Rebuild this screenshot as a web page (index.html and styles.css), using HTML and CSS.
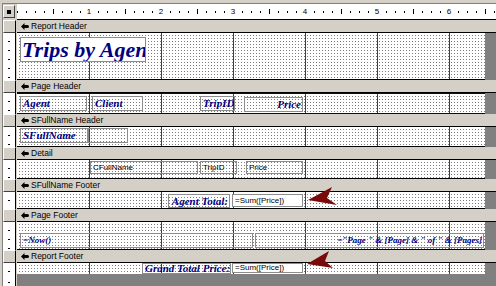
FILE: index.html
```html
<!DOCTYPE html>
<html lang="en">
<head>
    <meta charset="UTF-8">
    <title>Trips by Agent - Report Design</title>
    <link rel="stylesheet" href="styles.css">
</head>
<body>
    <div class="frame">
        <!-- ruler -->
        <div class="ruler-row">
            <div class="corner"><span class="corner-box"><i></i></span></div>
            <div class="hruler">
                <span class="lead"></span>
                <span class="num"><b>1</b></span>
                <span class="num"><b>2</b></span>
                <span class="num"><b>3</b></span>
                <span class="num"><b>4</b></span>
                <span class="num"><b>5</b></span>
                <span class="num"><b>6</b></span>
            </div>
        </div>

        <!-- Report Header -->
        <div class="bar">
            <div class="sel"></div>
            <div class="bar-title"><svg class="ico" viewBox="0 0 8 7"><path d="M0 3.5L3.5 0V2H6.5Q8 2 8 3.5Q8 5 6.5 5H3.5V7Z"/></svg>Report Header</div>
        </div>
        <div class="body rh">
            <div class="vruler"></div>
            <div class="canvas">
                <div class="cols"><i></i><i></i><i></i><i></i><i></i><i></i><i></i></div>
                <div class="ctl lbl title" style="left:3px;top:4px;width:126px;height:25px">Trips by Agent</div>
            </div>
            <div class="gutter"></div>
        </div>

        <!-- Page Header -->
        <div class="bar">
            <div class="sel"></div>
            <div class="bar-title"><svg class="ico" viewBox="0 0 8 7"><path d="M0 3.5L3.5 0V2H6.5Q8 2 8 3.5Q8 5 6.5 5H3.5V7Z"/></svg>Page Header</div>
        </div>
        <div class="body ph">
            <div class="vruler"></div>
            <div class="canvas lined">
                <div class="cols"><i></i><i></i><i></i><i></i><i></i><i></i><i></i></div>
                <div class="ctl lbl" style="left:3px;top:2px;width:67px;height:15px">Agent</div>
                <div class="ctl lbl" style="left:75px;top:2px;width:51px;height:15px">Client</div>
                <div class="ctl lbl right" style="left:183px;top:2px;width:35px;height:15px">TripID</div>
                <div class="ctl lbl right" style="left:227px;top:3px;width:59px;height:15px">Price</div>
            </div>
            <div class="gutter"></div>
        </div>

        <!-- SFullName Header -->
        <div class="bar">
            <div class="sel"></div>
            <div class="bar-title"><svg class="ico" viewBox="0 0 8 7"><path d="M0 3.5L3.5 0V2H6.5Q8 2 8 3.5Q8 5 6.5 5H3.5V7Z"/></svg>SFullName Header</div>
        </div>
        <div class="body sfh">
            <div class="vruler"></div>
            <div class="canvas">
                <div class="cols"><i></i><i></i><i></i><i></i><i></i><i></i><i></i></div>
                <div class="ctl lbl" style="left:3px;top:1px;width:68px;height:15px">SFullName</div>
                <div class="ctl" style="left:71px;top:1px;width:40px;height:15px"></div>
            </div>
            <div class="gutter"></div>
        </div>

        <!-- Detail -->
        <div class="bar">
            <div class="sel"></div>
            <div class="bar-title"><svg class="ico" viewBox="0 0 8 7"><path d="M0 3.5L3.5 0V2H6.5Q8 2 8 3.5Q8 5 6.5 5H3.5V7Z"/></svg>Detail</div>
        </div>
        <div class="body det">
            <div class="vruler"></div>
            <div class="canvas">
                <div class="cols"><i></i><i></i><i></i><i></i><i></i><i></i><i></i></div>
                <div class="ctl txt" style="left:73px;top:1px;width:108px;height:13px">CFullName</div>
                <div class="ctl txt" style="left:183px;top:1px;width:37px;height:13px">TripID</div>
                <div class="ctl txt" style="left:229px;top:1px;width:57px;height:13px">Price</div>
            </div>
            <div class="gutter"></div>
        </div>

        <!-- SFullName Footer -->
        <div class="bar">
            <div class="sel"></div>
            <div class="bar-title"><svg class="ico" viewBox="0 0 8 7"><path d="M0 3.5L3.5 0V2H6.5Q8 2 8 3.5Q8 5 6.5 5H3.5V7Z"/></svg>SFullName Footer</div>
        </div>
        <div class="body sff">
            <div class="vruler"></div>
            <div class="canvas">
                <div class="cols"><i></i><i></i><i></i><i></i><i></i><i></i><i></i></div>
                <div class="ctl lbl right" style="left:151px;top:2px;width:62px;height:14px">Agent Total:</div>
                <div class="ctl txt box" style="left:215px;top:2px;width:71px;height:13px">=Sum([Price])</div>
            </div>
            <div class="gutter"></div>
        </div>

        <!-- Page Footer -->
        <div class="bar">
            <div class="sel"></div>
            <div class="bar-title"><svg class="ico" viewBox="0 0 8 7"><path d="M0 3.5L3.5 0V2H6.5Q8 2 8 3.5Q8 5 6.5 5H3.5V7Z"/></svg>Page Footer</div>
        </div>
        <div class="body pf">
            <div class="vruler"></div>
            <div class="canvas">
                <div class="cols"><i></i><i></i><i></i><i></i><i></i><i></i><i></i></div>
                <div class="ctl lbl expr" style="left:3px;top:11px;width:233px;height:15px">=Now()</div>
                <div class="ctl lbl expr right" style="left:238px;top:11px;width:229px;height:15px">="Page " &amp; [Page] &amp; " of " &amp; [Pages]</div>
            </div>
            <div class="gutter"></div>
        </div>

        <!-- Report Footer -->
        <div class="bar">
            <div class="sel"></div>
            <div class="bar-title"><svg class="ico" viewBox="0 0 8 7"><path d="M0 3.5L3.5 0V2H6.5Q8 2 8 3.5Q8 5 6.5 5H3.5V7Z"/></svg>Report Footer</div>
        </div>
        <div class="body rf">
            <div class="vruler"></div>
            <div class="canvas">
                <div class="cols"><i></i><i></i><i></i><i></i><i></i><i></i><i></i></div>
                <div class="ctl lbl right" style="left:125px;top:0;width:89px;height:11px">Grand Total Price:</div>
                <div class="ctl txt box" style="left:215px;top:0;width:71px;height:10px">=Sum([Price])</div>
            </div>
            <div class="gutter"></div>
        </div>

        <div class="tail">
            <div class="vruler"></div>
            <div class="void"></div>
        </div>
    </div>

    <!-- callout arrows -->
    <svg class="arrows" width="496" height="286" viewBox="0 0 496 286">
        <path d="M308 200L332 187L327 198L337 205Z"/>
        <path d="M307 264L329 251L325 261L333 268Z"/>
    </svg>
</body>
</html>
```

FILE: styles.css
```css
* {
    box-sizing: border-box;
}
html, body {
    margin: 0;
    padding: 0;
}
body {
    position: relative;
    width: 496px;
    height: 286px;
    overflow: hidden;
    background-color: #d4d0c8;
    font-family: "Liberation Sans", Arial, sans-serif;
}
.frame {
    margin: 3px 0 0 2px;
    height: 283px;
    border-top: 1px solid #808080;
    border-left: 1px solid #808080;
    display: flex;
    flex-direction: column;
}

/* rulers */
.ruler-row {
    display: flex;
    height: 16px;
    flex: none;
}
.corner {
    width: 14px;
    padding: 1px 2px 2px 0;
}
.corner-box {
    display: flex;
    align-items: center;
    justify-content: center;
    height: 100%;
    border: 1px solid;
    border-color: #fff #404040 #404040 #fff;
}
.corner-box i {
    width: 4px;
    height: 4px;
    background: #000;
}
.hruler {
    flex: 1;
    display: flex;
    align-items: center;
    background-color: #fff;
    border-bottom: 1px solid #000;
    background-image:
        linear-gradient(to right, #000 1px, transparent 1px),
        linear-gradient(to right, #000 1px, transparent 1px);
    background-size: 9px 2px, 72px 5px;
    background-position: 0 7px, 36px 5px;
    background-repeat: repeat-x;
}
.hruler .lead {
    width: 36px;
    flex: none;
}
.hruler .num {
    width: 72px;
    flex: none;
    text-align: center;
    font-size: 8px;
    line-height: 8px;
}
.hruler .num b {
    font-weight: normal;
    background: #fff;
    padding: 0 1px;
}
.vruler {
    width: 13px;
    margin-right: 1px;
    border-right: 1px solid #000;
    background-color: #fff;
    background-image: linear-gradient(to bottom, #000 1px, transparent 1px);
    background-size: 2px 9px;
    background-position: 5px 8px;
    background-repeat: repeat-y;
}

/* section bars */
.bar {
    display: flex;
    height: 13px;
    flex: none;
}
.sel {
    width: 13px;
    margin-right: 1px;
    border: 1px solid;
    border-color: #fff #404040 #404040 #fff;
    border-right: 1px solid #000;
}
.bar-title {
    flex: 1;
    display: flex;
    align-items: center;
    padding-left: 4px;
    font-size: 8.5px;
    color: #000;
    border-bottom: 1px solid #000;
}
.ico {
    width: 8px;
    height: 7px;
    margin-right: 2px;
    fill: #000;
}

/* section bodies */
.body {
    display: flex;
    flex: none;
}
.rh { height: 47px; }
.ph { height: 21px; }
.sfh { height: 20px; }
.det { height: 19px; }
.sff { height: 17px; }
.pf { height: 28px; }
.rf { height: 11px; }

.canvas {
    position: relative;
    width: 468px;
    overflow: hidden;
    border-bottom: 1px solid #000;
    background-color: #fff;
    background-image:
        linear-gradient(90deg, #fff 2px, transparent 2px),
        linear-gradient(#fff 2px, #7c7c7c 2px);
    background-size: 3px 3px;
}
.rf .canvas {
    border-bottom: none;
}
.canvas.lined {
    border-top: 1px solid #000080;
    border-bottom-color: #000080;
}
.cols {
    display: flex;
    height: 100%;
}
.cols i {
    width: 72px;
    flex: none;
}
.cols i + i {
    border-left: 1px solid #404040;
}
.cols i:last-child {
    flex: 1;
}
.gutter {
    flex: 1;
    background: #808080;
}
.tail {
    flex: 1;
    display: flex;
}
.void {
    flex: 1;
    background: #808080;
}

/* controls */
.ctl {
    position: absolute;
    border: 1px solid #8c8c8c;
    white-space: nowrap;
    overflow: hidden;
}
.lbl {
    font-family: "Liberation Serif", "Times New Roman", serif;
    font-weight: bold;
    font-style: italic;
    font-size: 11px;
    line-height: 13px;
    color: #000080;
    padding: 0 1px 0 2px;
}
.lbl.right {
    text-align: right;
}
.title {
    background: #fff;
    font-size: 22px;
    line-height: 23px;
    padding-left: 1px;
}
.expr {
    font-size: 9px;
    line-height: 13px;
}
.txt {
    font-size: 8px;
    line-height: 11px;
    color: #000;
    padding: 0 2px;
}
.txt.box {
    background: #fff;
}
.rf .txt {
    line-height: 8px;
}
.rf .lbl {
    line-height: 9px;
}

.arrows {
    position: absolute;
    left: 0;
    top: 0;
    fill: #7a0a0a;
    pointer-events: none;
}
```
